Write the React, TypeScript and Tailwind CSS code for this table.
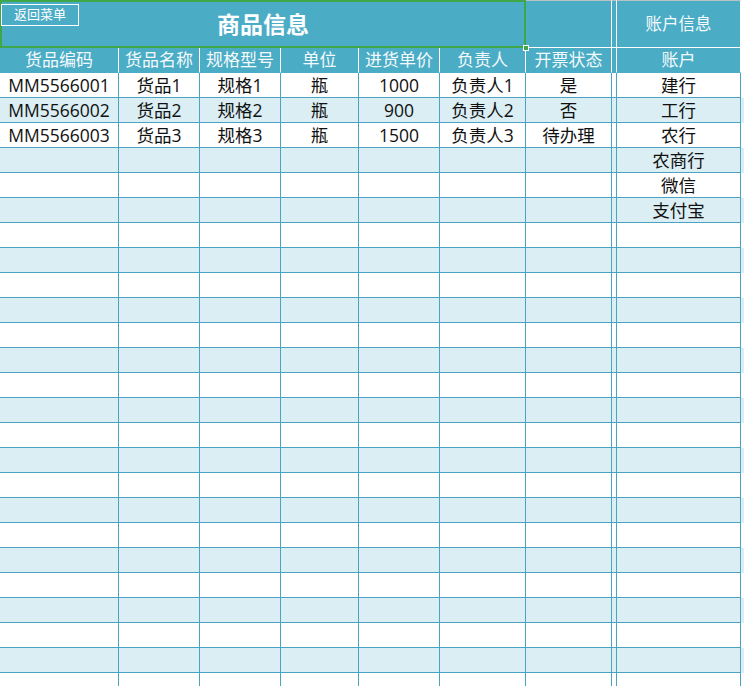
const cols = ['w-[119px]', 'w-[81px]', 'w-[81px]', 'w-[78px]', 'w-[81px]', 'w-[86px]', 'w-[86px]', 'w-[5px]', 'w-[124px]'];

const headers = ['货品编码', '货品名称', '规格型号', '单位', '进货单价', '负责人', '开票状态', '', '账户'];

const goods = [
  ['MM5566001', '货品1', '规格1', '瓶', '1000', '负责人1', '是'],
  ['MM5566002', '货品2', '规格2', '瓶', '900', '负责人2', '否'],
  ['MM5566003', '货品3', '规格3', '瓶', '1500', '负责人3', '待办理'],
];

const accounts = ['建行', '工行', '农行', '农商行', '微信', '支付宝'];

export default function App() {
  const rows = Array.from({ length: 25 }, (_, i) => {
    const g = goods[i] || ['', '', '', '', '', '', ''];
    return [...g, '', accounts[i] || ''];
  });

  return (
    <div
      className="w-[744px] h-[686px] overflow-hidden bg-white text-[17.5px] text-[#111]"
      style={{ fontFamily: '"Open Sans", "Noto Sans CJK SC", sans-serif' }}
    >
      {/* Title row */}
      <div className="flex h-[48px]">
        <div className="relative w-[526px] h-[48px] bg-[#4bacc6] flex items-center justify-center">
          <span className="text-white font-bold text-[23px]">商品信息</span>
          <div className="absolute left-0 top-0 w-[526px] h-[48px] border-[2.5px] border-[#3fa64a] pointer-events-none" />
          <div className="absolute right-[-3px] bottom-[-3px] w-[6px] h-[6px] bg-[#3fa64a] border border-white" />
          <div className="absolute left-[1px] top-[4px] w-[78px] h-[22px] border border-white flex items-center justify-center text-[13px] text-white">
            返回菜单
          </div>
        </div>
        <div className="w-[86px] h-[48px] bg-[#4bacc6] border-r border-b border-t border-t-[#b9c3c6] border-white" />
        <div className="w-[5px] h-[48px] bg-[#4bacc6] border-r border-b border-t border-t-[#b9c3c6] border-white" />
        <div className="w-[124px] h-[48px] bg-[#4bacc6] border-r border-b border-t border-t-[#b9c3c6] border-white flex items-center justify-center text-[#f4fafc] text-[16.5px]">
          账户信息
        </div>
      </div>

      {/* Header row */}
      <div className="flex h-[25px]">
        {headers.map((h, i) => (
          <div
            key={i}
            className={`${cols[i]} h-[25px] bg-[#4bacc6] border-r border-r-white border-b border-b-[#4bacc6] flex items-center justify-center text-[#f4fafc] text-[17px] whitespace-nowrap`}
          >
            {h}
          </div>
        ))}
      </div>

      {/* Body rows */}
      {rows.map((r, ri) => (
        <div key={ri} className={`flex h-[25px] ${ri % 2 === 1 ? 'bg-[#daeef3]' : 'bg-white'}`}>
          {r.map((c, ci) => (
            <div
              key={ci}
              className={`${cols[ci]} h-[25px] border-r border-b border-[#4aa4c1] flex items-center justify-center whitespace-nowrap`}
            >
              {c}
            </div>
          ))}
        </div>
      ))}
    </div>
  );
}
